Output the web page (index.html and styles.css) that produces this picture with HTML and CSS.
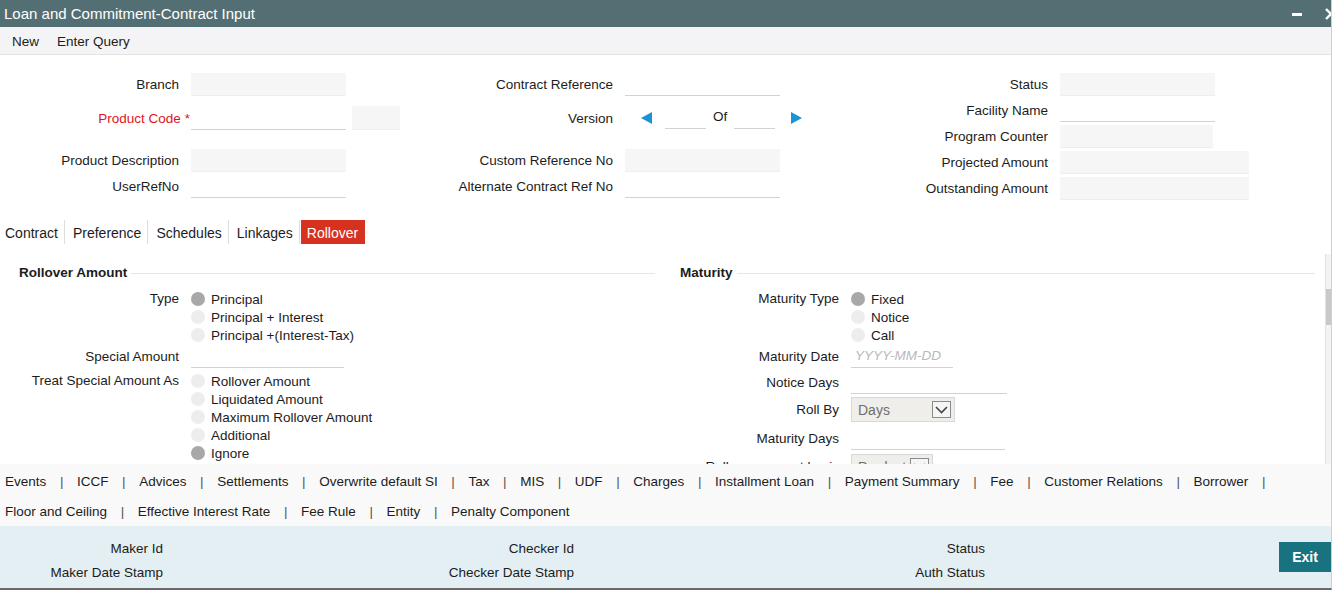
FILE: index.html
```html
<!DOCTYPE html>
<html lang="en">
<head>
  <meta charset="UTF-8" />
  <title>Loan and Commitment-Contract Input</title>
  <link rel="stylesheet" href="styles.css">
</head>
<body>
<div class="window">
  <div class="titlebar">
    <span class="title">Loan and Commitment-Contract Input</span>
    <div class="win-ctrls">
      <svg class="ctrl-min" width="10" height="10" viewBox="0 0 10 10"><rect x="0" y="4" width="10" height="3" fill="#fff"/></svg>
      <svg class="ctrl-close" width="12" height="12" viewBox="0 0 12 12"><path d="M1 1 L11 11 M11 1 L1 11" stroke="#fff" stroke-width="2.4"/></svg>
    </div>
  </div>

  <div class="toolbar">
    <span>New</span>
    <span>Enter Query</span>
  </div>

  <div class="header">
    <div class="hcol">
      <div class="frow"><label>Branch</label><span class="fld box w155"></span></div>
      <div class="frow gap-sm"><label class="req">Product Code<b>*</b></label><span class="fld line w155"></span><span class="fld box small"></span></div>
      <div class="frow gap-lg"><label>Product Description</label><span class="fld box w155"></span></div>
      <div class="frow"><label>UserRefNo</label><span class="fld line w155"></span></div>
    </div>
    <div class="hcol">
      <div class="frow"><label>Contract Reference</label><span class="fld line w155"></span></div>
      <div class="frow gap-sm">
        <label>Version</label>
        <svg class="ver-prev" width="11" height="12" viewBox="0 0 11 12"><polygon points="11,0 11,12 0,6" fill="#1e93d2"/></svg>
        <span class="fld line ver"></span>
        <span class="of">Of</span>
        <span class="fld line ver"></span>
        <svg class="ver-next" width="11" height="12" viewBox="0 0 11 12"><polygon points="0,0 0,12 11,6" fill="#1e93d2"/></svg>
      </div>
      <div class="frow gap-lg"><label>Custom Reference No</label><span class="fld box w155"></span></div>
      <div class="frow"><label>Alternate Contract Ref No</label><span class="fld line w155"></span></div>
    </div>
    <div class="hcol">
      <div class="frow"><label>Status</label><span class="fld box w155"></span></div>
      <div class="frow"><label>Facility Name</label><span class="fld line w155"></span></div>
      <div class="frow"><label>Program Counter</label><span class="fld box w153"></span></div>
      <div class="frow"><label>Projected Amount</label><span class="fld box w189"></span></div>
      <div class="frow"><label>Outstanding Amount</label><span class="fld box w189"></span></div>
    </div>
  </div>

  <div class="tabs">
    <span class="tab first">Contract</span>
    <span class="tab">Preference</span>
    <span class="tab">Schedules</span>
    <span class="tab">Linkages</span>
    <span class="tab active">Rollover</span>
  </div>

  <div class="tabbody">
    <div class="section">
      <div class="legend"><h3>Rollover Amount</h3><div class="rule"></div></div>
      <div class="srow first-row">
        <label>Type</label>
        <div class="radios">
          <div class="radio"><span class="dot on"></span>Principal</div>
          <div class="radio"><span class="dot"></span>Principal + Interest</div>
          <div class="radio"><span class="dot"></span>Principal +(Interest-Tax)</div>
        </div>
      </div>
      <div class="srow field mt2"><label>Special Amount</label><span class="fld line w153"></span></div>
      <div class="srow mt4">
        <label>Treat Special Amount As</label>
        <div class="radios">
          <div class="radio"><span class="dot"></span>Rollover Amount</div>
          <div class="radio"><span class="dot"></span>Liquidated Amount</div>
          <div class="radio"><span class="dot"></span>Maximum Rollover Amount</div>
          <div class="radio"><span class="dot"></span>Additional</div>
          <div class="radio"><span class="dot on"></span>Ignore</div>
        </div>
      </div>
    </div>

    <div class="section right">
      <div class="legend"><h3>Maturity</h3><div class="rule"></div></div>
      <div class="srow first-row">
        <label>Maturity Type</label>
        <div class="radios">
          <div class="radio"><span class="dot on"></span>Fixed</div>
          <div class="radio"><span class="dot"></span>Notice</div>
          <div class="radio"><span class="dot"></span>Call</div>
        </div>
      </div>
      <div class="srow field mt2"><label>Maturity Date</label><span class="fld line w102 placeholder">YYYY-MM-DD</span></div>
      <div class="srow field mt4"><label>Notice Days</label><span class="fld line w156"></span></div>
      <div class="srow sel-row mt3">
        <label>Roll By</label>
        <div class="select w104"><span>Days</span><span class="caret"><svg width="13" height="8" viewBox="0 0 13 8"><path d="M1 1 L6.5 6.5 L12 1" fill="none" stroke="#444" stroke-width="1.6"/></svg></span></div>
      </div>
      <div class="srow field mt6"><label>Maturity Days</label><span class="fld line w154"></span></div>
      <div class="srow sel-row mt4">
        <label>Rollover amount basis</label>
        <div class="select w82"><span>Product</span><span class="caret"><svg width="13" height="8" viewBox="0 0 13 8"><path d="M1 1 L6.5 6.5 L12 1" fill="none" stroke="#444" stroke-width="1.6"/></svg></span></div>
      </div>
    </div>

    <div class="scrollbar"><div class="thumb"></div></div>
  </div>

  <div class="links">
    <div class="lrow">
      <span>Events</span><i>|</i><span>ICCF</span><i>|</i><span>Advices</span><i>|</i><span>Settlements</span><i>|</i><span>Overwrite default SI</span><i>|</i><span>Tax</span><i>|</i><span>MIS</span><i>|</i><span>UDF</span><i>|</i><span>Charges</span><i>|</i><span>Installment Loan</span><i>|</i><span>Payment Summary</span><i>|</i><span>Fee</span><i>|</i><span>Customer Relations</span><i>|</i><span>Borrower</span><i>|</i>
    </div>
    <div class="lrow">
      <span>Floor and Ceiling</span><i>|</i><span>Effective Interest Rate</span><i>|</i><span>Fee Rule</span><i>|</i><span>Entity</span><i>|</i><span>Penalty Component</span>
    </div>
  </div>

  <div class="audit">
    <span class="alabel">Maker Id</span>
    <span class="alabel">Checker Id</span>
    <span class="alabel">Status</span>
    <button class="exit">Exit</button>
    <span class="alabel">Maker Date Stamp</span>
    <span class="alabel">Checker Date Stamp</span>
    <span class="alabel">Auth Status</span>
  </div>
</div>
</body>
</html>
```

FILE: styles.css
```css
body {
  margin: 0;
  font-family: "Liberation Sans", Arial, sans-serif;
  font-size: 13.5px;
  color: #1c1c1c;
  background: #fff;
}

.window {
  width: 1332px;
  height: 590px;
  box-sizing: border-box;
  border-right: 1px solid #cfcfcf;
  border-bottom: 2px solid #6a6a6a;
  overflow: hidden;
  display: flex;
  flex-direction: column;
}

/* title + toolbar */
.titlebar {
  height: 27px;
  flex: none;
  background: #546f74;
  color: #fff;
  display: flex;
  align-items: center;
  justify-content: space-between;
  padding-left: 4px;
  font-size: 15px;
}

.win-ctrls {
  display: flex;
  align-items: center;
  gap: 23px;
  margin-right: -6px;
}

.toolbar {
  height: 28px;
  flex: none;
  box-sizing: border-box;
  padding: 2px 0 0 12px;
  background: #f4f4f6;
  border-bottom: 1px solid #e4e4e4;
  display: flex;
  align-items: center;
  gap: 18px;
  font-size: 13.5px;
}

/* header fields */
.header {
  height: 159px;
  flex: none;
  display: flex;
  padding-top: 16px;
  box-sizing: border-box;
}

.hcol { width: 434px; }
.hcol + .hcol { width: 435px; }

.frow {
  display: flex;
  align-items: center;
  height: 26px;
}

.frow label, .srow label {
  width: 179px;
  margin-right: 12px;
  text-align: right;
  flex: none;
}

.gap-sm { margin-top: 8px; }
.gap-lg { margin-top: 16px; }

.req { color: #e1141e; }
.req b {
  font-weight: normal;
  margin-left: 4px;
  margin-right: -11px;
}

.fld {
  display: block;
  box-sizing: border-box;
  flex: none;
}

.fld.box {
  height: 23px;
  background: #f6f6f6;
  border-bottom: 1px solid #eeeeee;
}

.fld.line {
  height: 23px;
  border-bottom: 1px solid #d2d2d2;
}

.fld.small {
  width: 48px;
  height: 24px;
  margin-left: 6px;
}

.w102 { width: 102px; }
.w153 { width: 153px; }
.w154 { width: 154px; }
.w155 { width: 155px; }
.w156 { width: 156px; }
.w189 { width: 189px; }

.ver-prev { margin-left: 16px; }
.fld.ver { width: 41px; margin-left: 13px; height: 22px; }
.of { margin-left: 7px; margin-top: -4px; }
.of + .fld.ver { margin-left: 7px; }
.ver-next { margin-left: 16px; }

/* tabs */
.tabs {
  display: flex;
  height: 24px;
  margin-top: 6px;
  flex: none;
  font-size: 14px;
}

.tab {
  display: flex;
  align-items: center;
  padding: 1px 6px 0 8px;
  border-right: 1px solid #dedede;
}

.tab.first { padding-left: 5px; }

.tab.active {
  background: #d6321f;
  color: #fff;
  border-right: none;
  margin-left: 1px;
  padding: 1px 7px 0 6px;
}

/* rollover tab body */
.tabbody {
  height: 220px;
  flex: none;
  display: flex;
  overflow: hidden;
}

.section { width: 655px; }
.section.right { margin-left: 5px; }

.legend {
  display: flex;
  align-items: center;
  height: 20px;
  margin-top: 18px;
}

.legend h3 {
  margin: 0 4px 0 19px;
  font-size: 13.5px;
}

.section.right .legend h3 { margin-left: 20px; }

.legend .rule {
  flex: 1;
  border-top: 1px solid #e6e6e6;
  margin-top: 2px;
}

.srow { display: flex; }
.srow.first-row { margin-top: 8px; }
.srow label { line-height: 18px; }

.srow.field {
  height: 22px;
  align-items: center;
}

.srow.field .fld.line { height: 22px; }

.sel-row { align-items: center; }

.mt2 { margin-top: 2px; }
.mt3 { margin-top: 3px; }
.mt4 { margin-top: 4px; }
.mt6 { margin-top: 6px; }

.radios {
  display: flex;
  flex-direction: column;
}

.radio {
  height: 18px;
  display: flex;
  align-items: center;
  gap: 6px;
}

.dot {
  width: 14px;
  height: 14px;
  border-radius: 50%;
  background: #ededed;
}

.dot.on { background: #a8a8a8; }

.placeholder {
  color: #b9b9b9;
  font-style: italic;
  padding-left: 4px;
  line-height: 20px;
}

.select {
  height: 25px;
  box-sizing: border-box;
  background: #efeeea;
  border: 1px solid #d8d8d8;
  display: flex;
  align-items: center;
  justify-content: space-between;
  padding: 0 3px 0 6px;
  color: #6e6e6e;
  font-size: 14px;
}

.w104 { width: 104px; }
.w82 { width: 82px; }

.caret {
  width: 19px;
  height: 17px;
  box-sizing: border-box;
  border: 1px solid #8a8a8a;
  background: #f5f5f5;
  display: flex;
  align-items: center;
  justify-content: center;
}

.scrollbar {
  width: 5px;
  margin-left: auto;
  margin-top: 10px;
  background: #f3f3f3;
  border-left: 1px solid #e2e2e2;
}

.scrollbar .thumb {
  height: 36px;
  margin-top: 35px;
  background: #c9c9c9;
}

/* links bar */
.links {
  height: 62px;
  flex: none;
  background: #f9f9f9;
  padding: 2px 0 0 5px;
  box-sizing: border-box;
}

.lrow {
  height: 30px;
  display: flex;
  align-items: center;
}

.lrow i {
  font-style: normal;
  color: #555;
  margin: 0 13.6px;
}

/* audit footer */
.audit {
  flex: 1;
  background: #e3eff2;
  display: grid;
  grid-template-columns: 163px 411px 411px 1fr;
  grid-auto-rows: 24px;
  padding-top: 11px;
}

.alabel {
  text-align: right;
  line-height: 24px;
}

.exit {
  grid-row: span 2;
  justify-self: end;
  align-self: start;
  margin-top: 5px;
  width: 52px;
  height: 30px;
  border: none;
  background: #187280;
  color: #fff;
  font-family: inherit;
  font-size: 14px;
  font-weight: bold;
}
```
